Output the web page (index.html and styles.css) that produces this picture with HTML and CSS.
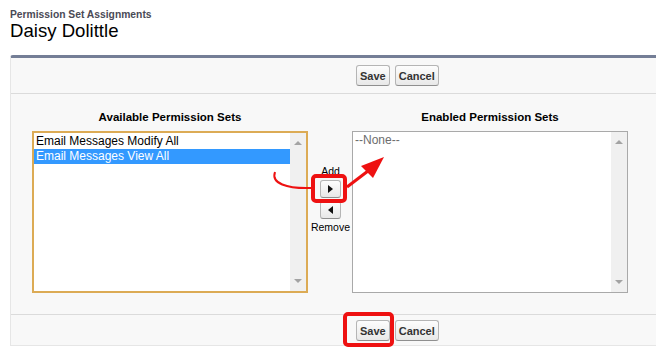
FILE: index.html
```html
<!DOCTYPE html>
<html lang="en">
<head>
    <meta charset="UTF-8">
    <meta name="viewport" content="width=device-width, initial-scale=1.0">
    <title>Permission Set Assignments</title>
    <link rel="stylesheet" href="styles.css">
</head>
<body>
    <div class="pageType">Permission Set Assignments</div>
    <h1 class="pageDescription">Daisy Dolittle</h1>
    <div class="pbPanel">
        <div class="pbButtonRow">
            <button class="btn">Save</button>
            <button class="btn">Cancel</button>
        </div>
        <div class="duelingSection">
            <div class="duelCol">
                <div class="duelLabel">Available Permission Sets</div>
                <div class="listBox listFocused">
                    <div class="listItems">
                        <div class="listItem">Email Messages Modify All</div>
                        <div class="listItem listSelected">Email Messages View All</div>
                    </div>
                    <div class="scrollTrack"><span class="arrowUp"></span><span class="arrowDown"></span></div>
                </div>
            </div>
            <div class="moveCol">
                <div class="moveText">Add</div>
                <button class="moveBtn"><span class="triRight"></span></button>
                <button class="moveBtn"><span class="triLeft"></span></button>
                <div class="moveText">Remove</div>
            </div>
            <div class="duelCol">
                <div class="duelLabel">Enabled Permission Sets</div>
                <div class="listBox">
                    <div class="listItems">
                        <div class="listItem listNone">--None--</div>
                    </div>
                    <div class="scrollTrack"><span class="arrowUp"></span><span class="arrowDown"></span></div>
                </div>
            </div>
        </div>
        <div class="pbButtonRow pbBottom">
            <button class="btn">Save</button>
            <button class="btn">Cancel</button>
        </div>
    </div>

    <!-- red annotation marks drawn over the page -->
    <svg class="marks" width="656" height="348" viewBox="0 0 656 348">
        <path d="M275,172 C271,183 286,189 312,188" fill="none" stroke="#ee1111" stroke-width="2"/>
        <rect x="313" y="176" width="32" height="25" rx="3" fill="none" stroke="#ee1111" stroke-width="4"/>
        <line x1="347" y1="187" x2="368" y2="171" stroke="#ee1111" stroke-width="3"/>
        <polygon points="384,157 361,166 373,178" fill="#ee1111"/>
        <rect x="345" y="314" width="47" height="31" rx="3" fill="none" stroke="#ee1111" stroke-width="4"/>
    </svg>
</body>
</html>
```

FILE: styles.css
```css
*{margin:0;padding:0;box-sizing:border-box;}
body{padding:9px 0 0 10px;font-family:"Liberation Sans",Arial,sans-serif;background:#fff;color:#000;overflow:hidden;height:348px;}
.pageType{font-size:10.3px;font-weight:bold;color:#4a4a56;line-height:11px;}
.pageDescription{font-size:18.6px;font-weight:normal;line-height:22px;color:#000;}
.pbPanel{margin-top:13px;background:#f8f8f8;border-top:3px solid #747e96;border-left:1px solid #e6e6e6;border-bottom:1px solid #e6e6e6;border-top-left-radius:3px;}
.pbButtonRow{height:36px;display:flex;align-items:center;gap:5px;padding-left:345px;border-bottom:1px solid #dbdbdb;}
.pbBottom{height:31px;border-top:1px solid #dbdbdb;border-bottom:none;padding-top:1px;}
.btn{height:21px;padding:0 3px;font-family:inherit;font-size:11px;font-weight:bold;color:#333;background:linear-gradient(#fdfdfd,#e8e8e8);border:1px solid #b5b5b5;border-bottom-color:#8f8f8f;border-radius:3px;}
.duelingSection{display:grid;grid-template-columns:276px 44px 276px;padding:16px 0 21px 21px;}
.duelCol{display:flex;flex-direction:column;}
.duelLabel{font-size:11.5px;font-weight:bold;line-height:14px;text-align:center;margin-bottom:7px;color:#000;}
.listBox{height:162px;display:flex;background:#fff;border:1px solid #a9a9a9;}
.listFocused{border:2px solid #dcab55;}
.listItems{flex:1;padding-top:1px;}
.listItem{font-size:12px;line-height:15px;padding-left:2px;white-space:nowrap;color:#000;}
.listSelected{background:#3399ff;color:#fff;}
.listNone{color:#6d6d6d;}
.scrollTrack{width:16px;background:#f0f0f0;display:flex;flex-direction:column;justify-content:space-between;align-items:center;padding:8px 0 8px 0;}
.arrowUp{width:0;height:0;border-left:4px solid transparent;border-right:4px solid transparent;border-bottom:4px solid #a3a3a3;}
.arrowDown{width:0;height:0;border-left:4px solid transparent;border-right:4px solid transparent;border-top:4px solid #a3a3a3;}
.moveCol{display:flex;flex-direction:column;align-items:center;padding-top:55px;padding-left:1px;}
.moveText{font-size:10.5px;line-height:12px;color:#000;}
.moveBtn{width:21px;height:18px;margin-top:3px;display:flex;justify-content:center;align-items:center;background:linear-gradient(#fdfdfd,#e8e8e8);border:1px solid #b5b5b5;border-bottom-color:#8f8f8f;border-radius:3px;}
.moveBtn + .moveBtn{margin-top:3px;margin-bottom:2px;}
.triRight{width:0;height:0;border-top:4px solid transparent;border-bottom:4px solid transparent;border-left:5px solid #111;}
.triLeft{width:0;height:0;border-top:4px solid transparent;border-bottom:4px solid transparent;border-right:5px solid #111;}
.marks{position:absolute;left:0;top:0;pointer-events:none;}
```
